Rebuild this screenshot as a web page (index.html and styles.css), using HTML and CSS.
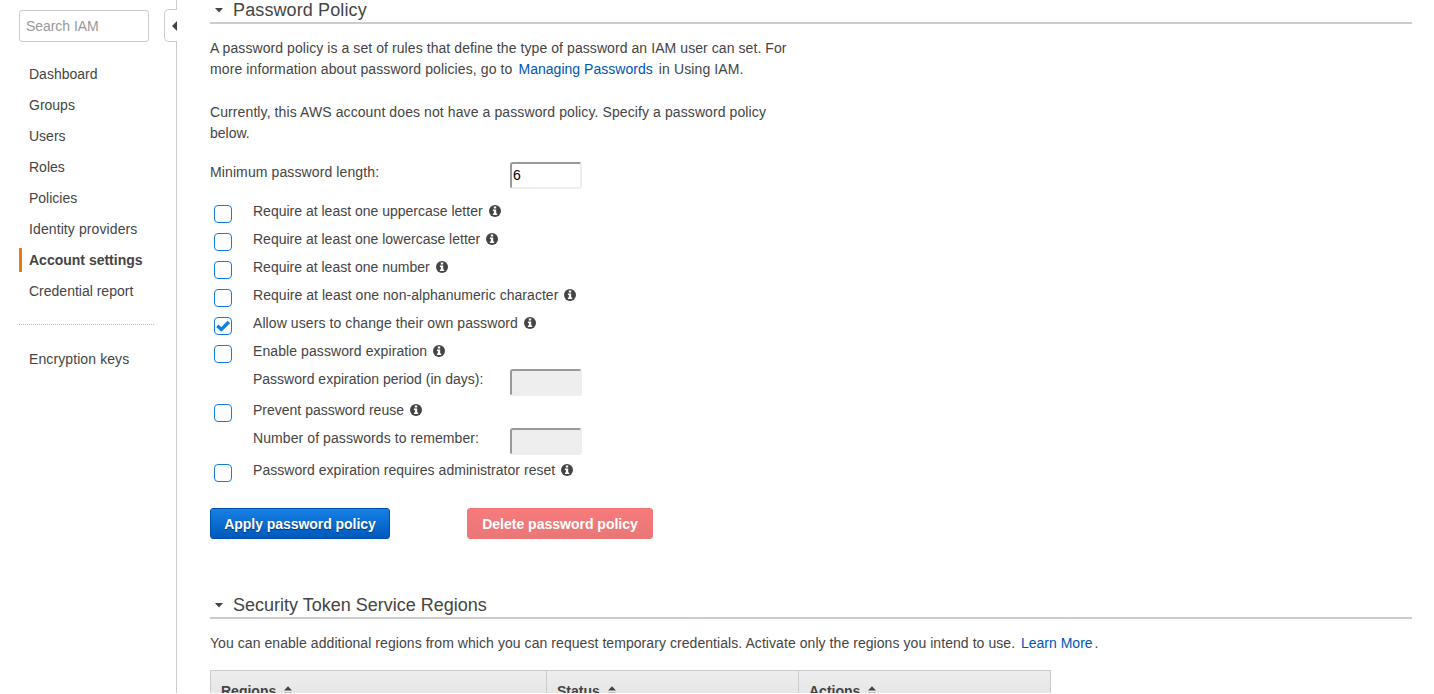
FILE: index.html
```html
<!DOCTYPE html>
<html lang="en">
<head>
<meta charset="utf-8">
<title>IAM Account settings</title>
<link rel="stylesheet" href="styles.css">
</head>
<body>
<svg class="defs" width="0" height="0">
  <symbol id="info" viewBox="0 0 12 12"><circle cx="6" cy="6" r="6" fill="#444"/><path d="M4.800 1.500h2.400v2H4.800zM3.900 4.400h3.300v4H8.200v1.500H3.900V8.400h1V5.900h-1z" fill="#fff"/></symbol>
  <symbol id="sort" viewBox="0 0 8 10"><path d="M0 4.500L4 0.300l4 4.200z" fill="#444"/><path d="M0 6h8L4 10z" fill="#bbb"/></symbol>
</svg>
<div class="page">
  <aside class="sidebar">
    <input class="search" type="text" placeholder="Search IAM">
    <nav class="nav">
      <a class="nav-item">Dashboard</a>
      <a class="nav-item">Groups</a>
      <a class="nav-item">Users</a>
      <a class="nav-item">Roles</a>
      <a class="nav-item">Policies</a>
      <a class="nav-item wide">Identity providers</a>
      <a class="nav-item active">Account settings</a>
      <a class="nav-item">Credential report</a>
    </nav>
    <div class="divider"></div>
    <a class="nav-item wide">Encryption keys</a>
    <div class="collapse"><svg width="5" height="10" viewBox="0 0 5 10"><path d="M5 0v10L0 5z" fill="#444"/></svg></div>
  </aside>
  <main class="main">
    <h2 class="heading"><svg class="caret" width="8" height="5" viewBox="0 0 8 5"><path d="M0 0h8L4 4.5z" fill="#444"/></svg><span class="h-policy">Password Policy</span></h2>
    <p class="intro"><span class="l1">A password policy is a set of rules that define the type of password an IAM user can set. For</span><br><span class="l2">more information about password policies, go to <a class="link">Managing Passwords</a> in Using IAM.</span></p>
    <p class="intro current"><span class="l3">Currently, this AWS account does not have a password policy. Specify a password policy</span><br>below.</p>
    <form class="form">
      <div class="row length"><label class="full">Minimum password length:</label><input class="field" type="text" value="6"></div>
      <div class="row"><i class="check"></i><label>Require at least one uppercase letter</label><svg class="info"><use href="#info"/></svg></div>
      <div class="row"><i class="check"></i><label>Require at least one lowercase letter</label><svg class="info"><use href="#info"/></svg></div>
      <div class="row"><i class="check"></i><label>Require at least one number</label><svg class="info"><use href="#info"/></svg></div>
      <div class="row"><i class="check"></i><label class="mid">Require at least one non-alphanumeric character</label><svg class="info"><use href="#info"/></svg></div>
      <div class="row"><i class="check"><svg width="14" height="12" viewBox="0 0 14 12"><path d="M1.300 5.700l4 3.700L12.900 1.900" fill="none" stroke="#147ee0" stroke-width="3.400"/></svg></i><label class="wide">Allow users to change their own password</label><svg class="info"><use href="#info"/></svg></div>
      <div class="row"><i class="check"></i><label class="wide">Enable password expiration</label><svg class="info"><use href="#info"/></svg></div>
      <div class="row period"><label class="sub">Password expiration period (in days):</label><input class="field" type="text" disabled></div>
      <div class="row"><i class="check"></i><label>Prevent password reuse</label><svg class="info"><use href="#info"/></svg></div>
      <div class="row remember"><label class="sub wide">Number of passwords to remember:</label><input class="field" type="text" disabled></div>
      <div class="row"><i class="check"></i><label class="mid">Password expiration requires administrator reset</label><svg class="info"><use href="#info"/></svg></div>
    </form>
    <div class="buttons"><button class="btn apply">Apply password policy</button><button class="btn delete">Delete password policy</button></div>
    <h2 class="heading second"><svg class="caret" width="8" height="5" viewBox="0 0 8 5"><path d="M0 0h8L4 4.5z" fill="#444"/></svg><span class="h-sts">Security Token Service Regions</span></h2>
    <p class="regions-text"><span class="l4">You can enable additional regions from which you can request temporary credentials. Activate only the regions you intend to use.</span> <a class="link learn">Learn More</a>.</p>
    <div class="table">
      <div class="th">Regions<svg class="sort"><use href="#sort"/></svg></div>
      <div class="th">Status<svg class="sort"><use href="#sort"/></svg></div>
      <div class="th">Actions<svg class="sort"><use href="#sort"/></svg></div>
    </div>
  </main>
</div>
</body>
</html>
```
FILE: styles.css
```css
* { box-sizing: border-box; }
body { margin: 0; background: #fff; color: #444; font: 14px/21px "Liberation Sans", Arial, sans-serif; overflow: hidden; }
.defs { position: absolute; }
.page { display: flex; height: 693px; overflow: hidden; }
.sidebar { position: relative; flex: none; width: 177px; border-right: 1px solid #ccc; padding: 10px 22px 0 19px; }
.search { display: block; width: 130px; height: 32px; border: 1px solid #ccc; border-radius: 3px; padding: 0 6px; font: 14px "Liberation Sans", Arial, sans-serif; letter-spacing: -0.05px; }
.search::placeholder { color: #999; opacity: 1; }
.nav { margin-top: 20px; }
.nav-item { display: block; height: 24px; margin-bottom: 7px; padding-left: 10px; line-height: 24px; white-space: nowrap; }
.nav-item.wide { letter-spacing: 0.1px; }
.active { border-left: 3px solid #e47911; border-left-color: #eb7a07; padding-left: 7px; font-weight: bold; }
.divider { width: 135px; border-top: 1px dotted #bbb; margin: 21px 0 22px; }
.collapse { position: absolute; left: 164px; top: 9px; width: 13px; height: 33px; border: 1px solid #ccc; border-right: 0; border-radius: 5px 0 0 5px; background: #fff; padding: 11px 0 0 7px; line-height: 0; }
.main { width: 1202px; margin-left: 33px; }
.heading { display: flex; align-items: center; height: 24px; margin: 0; padding: 0 0 3px 5px; border-bottom: 2px solid #ccc; font-size: 18px; font-weight: normal; line-height: 20px; }
.caret { margin-right: 10px; margin-top: 2px; }
.h-policy { letter-spacing: 0.12px; }
.intro { margin: 14px 0 0; line-height: 21px; white-space: nowrap; }
.current { margin-top: 22px; }
.l1 { letter-spacing: 0.075px; }
.l2 { letter-spacing: 0.11px; }
.l3 { letter-spacing: 0.098px; }
.l4 { letter-spacing: 0.062px; }
.link { color: #0054b4; margin: 0 2px; }
.l2 .link { letter-spacing: 0.03px; }
.form { margin-top: 14px; }
.row { display: flex; height: 28px; line-height: 28px; white-space: nowrap; }
.length { height: 39px; }
.period { height: 31px; }
.remember { height: 32px; }
.full { width: 300px; letter-spacing: 0.11px; }
.sub { width: 257px; margin-left: 43px; }
.mid { letter-spacing: 0.04px; }
.row .wide { letter-spacing: 0.085px; }
.check { flex: none; width: 18px; height: 18px; margin: 8px 21px 0 4px; border: 1px solid #147ee0; border-radius: 4px; line-height: 0; padding: 2px 0 0 1px; }
.info { width: 12px; height: 12px; margin: 8px 0 0 6px; }
.field { width: 72px; height: 27px; margin-top: 4px; padding: 0 1px 2px; border: 2px solid; border-color: #999 #eee #eee #999; border-radius: 3px; font: 14px "Liberation Sans", Arial, sans-serif; color: #000; }
.field:disabled { background: #eee; }
.buttons { display: flex; gap: 77px; margin-top: 24px; }
.btn { height: 31px; padding: 0; border: 1px solid #004fae; border-radius: 3px; color: #fff; font: bold 14px "Liberation Sans", Arial, sans-serif; white-space: nowrap; }
.apply { width: 180px; background: linear-gradient(#1680e5, #0059bc); text-shadow: 0 1px 1px #003370; letter-spacing: -0.05px; }
.delete { width: 186px; border-color: #f07676; background: linear-gradient(#f77a7c, #e97777); }
.second { margin-top: 56px; }
.regions-text { margin: 14px 0 0; white-space: nowrap; }
.table { display: grid; grid-template-columns: 336px 252px 252px; width: 841px; height: 50px; margin-top: 16px; border-top: 1px solid #ccc; border-left: 1px solid #ccc; background: linear-gradient(#eee, #ddd); }
.th { border-right: 1px solid #ccc; padding: 10px 0 0 10px; font-weight: bold; }
.sort { width: 8px; height: 10px; margin-left: 8px; }
```
